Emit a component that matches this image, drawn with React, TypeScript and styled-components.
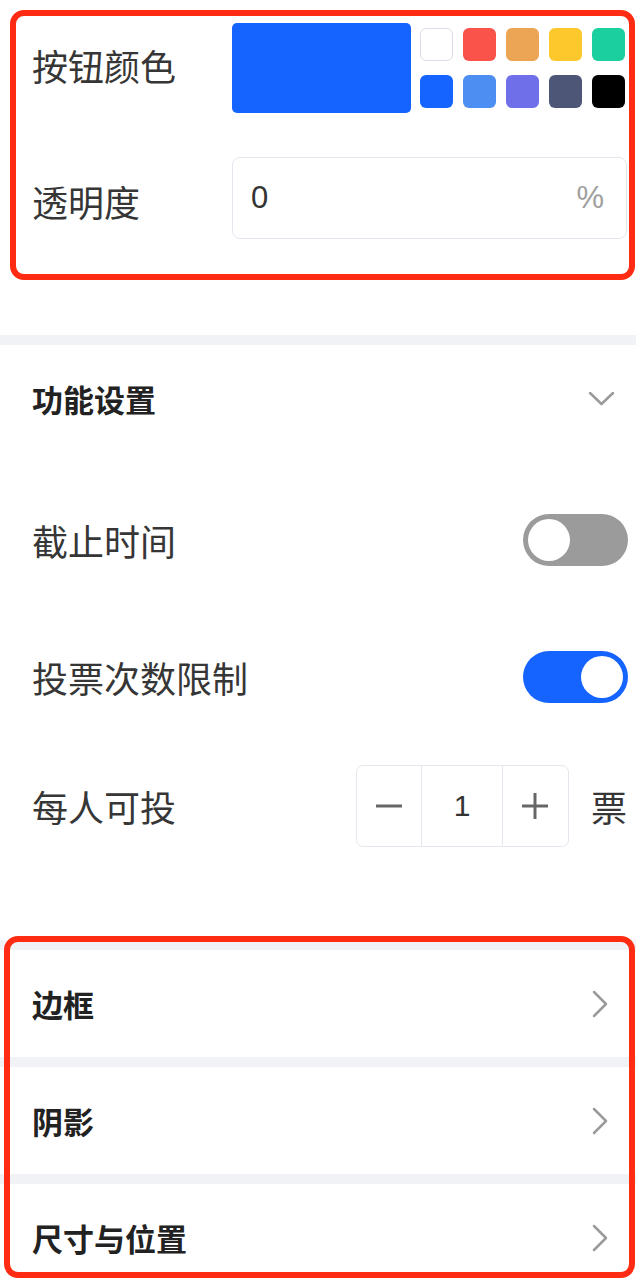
import styled, { createGlobalStyle } from 'styled-components';

const GlobalStyle = createGlobalStyle`
  body {
    margin: 0;
    background: #fff;
    font-family: "Noto Sans CJK SC", "Noto Sans", sans-serif;
  }
`;

const Page = styled.div`
  position: relative;
  width: 636px;
  height: 1280px;
  overflow: hidden;
  background: #fff;
`;

// red annotation frames drawn over the panel
const Marker = styled.div<{ $top: number; $left: number; $width: number; $height: number }>`
  position: absolute;
  top: ${(p) => p.$top}px;
  left: ${(p) => p.$left}px;
  width: ${(p) => p.$width}px;
  height: ${(p) => p.$height}px;
  box-sizing: border-box;
  border: 6px solid #ff2b12;
  border-radius: 14px;
  pointer-events: none;
`;

const Band = styled.div`
  height: 10px;
  background: #f0f2f6;
`;

const StyleSection = styled.section`
  display: flex;
  flex-direction: column;
  gap: 44px;
  padding: 23px 9px 96px 32px;
`;

const FieldRow = styled.div<{ $height: number }>`
  display: flex;
  align-items: center;
  height: ${(p) => p.$height}px;
`;

const Label = styled.span<{ $width?: number; $shift?: number }>`
  flex: 0 0 ${(p) => (p.$width ? `${p.$width}px` : 'auto')};
  font-size: 36px;
  line-height: 1;
  color: #363636;
  margin-top: ${(p) => (p.$shift ?? 0) * 2}px;
`;

const BigSwatch = styled.div`
  width: 179px;
  height: 90px;
  border-radius: 5px;
  background: #1664ff;
`;

const SwatchGrid = styled.div`
  display: grid;
  grid-template-columns: repeat(5, 33px);
  grid-auto-rows: 33px;
  column-gap: 10px;
  row-gap: 14px;
  margin-left: 9px;
`;

const Swatch = styled.div<{ $color: string }>`
  border-radius: 6px;
  background: ${(p) => p.$color};
  box-sizing: border-box;
  border: ${(p) => (p.$color === '#ffffff' ? '1.5px solid #d9dee7' : 'none')};
`;

const InputBox = styled.div`
  flex: 1;
  height: 82px;
  box-sizing: border-box;
  display: flex;
  align-items: center;
  justify-content: space-between;
  padding: 0 22px 0 18px;
  border: 1.5px solid #e4e8ee;
  border-radius: 8px;
`;

const InputValue = styled.span<{ $muted?: boolean }>`
  font-family: "Liberation Sans", Arial, sans-serif;
  font-size: 31px;
  color: ${(p) => (p.$muted ? '#a0a0a0' : '#333')};
`;

const SettingsSection = styled.section`
  display: flex;
  flex-direction: column;
  padding-bottom: 89px;
`;

const SectionHeader = styled.div`
  display: flex;
  align-items: center;
  justify-content: space-between;
  height: 106px;
  padding: 0 21px 0 32px;
`;

const Title = styled.span`
  font-size: 31px;
  line-height: 1;
  font-weight: 700;
  color: #222;
`;

const SettingRows = styled.div`
  display: flex;
  flex-direction: column;
  gap: 31px;
  padding-top: 36px;
`;

const SettingRow = styled.div<{ $height: number }>`
  display: flex;
  align-items: center;
  justify-content: space-between;
  height: ${(p) => p.$height}px;
  padding: 0 8px 0 32px;
`;

const Toggle = styled.div<{ $on: boolean }>`
  position: relative;
  width: 105px;
  height: 52px;
  border-radius: 26px;
  background: ${(p) => (p.$on ? '#1664ff' : '#9b9b9b')};

  &::after {
    content: '';
    position: absolute;
    top: 5px;
    left: ${(p) => (p.$on ? '58px' : '5px')};
    width: 42px;
    height: 42px;
    border-radius: 50%;
    background: #fff;
  }
`;

const StepperGroup = styled.div`
  display: flex;
  align-items: center;
  gap: 22px;
  padding-right: 1px;
`;

const Stepper = styled.div`
  display: flex;
  height: 82px;
  box-sizing: border-box;
  border: 1.5px solid #e4e8ee;
  border-radius: 7px;
`;

const StepCell = styled.div<{ $width: number }>`
  display: flex;
  align-items: center;
  justify-content: center;
  width: ${(p) => p.$width}px;
  font-family: "Liberation Sans", Arial, sans-serif;
  font-size: 30px;
  color: #333;

  & + & {
    border-left: 1.5px solid #e4e8ee;
  }
`;

const LinkRow = styled.div`
  display: flex;
  align-items: center;
  justify-content: space-between;
  height: 107px;
  padding: 0 28px 0 32px;
`;

const swatches = [
  '#ffffff',
  '#f9534a',
  '#eca455',
  '#fcc82b',
  '#1ccf9f',
  '#1664ff',
  '#4c8ef1',
  '#6f6fe9',
  '#4d5677',
  '#000000',
];

function ChevronDown() {
  return (
    <svg width="27" height="15" viewBox="0 0 27 15">
      <polyline points="2,2 13.5,13 25,2" fill="none" stroke="#9a9a9a" strokeWidth="2.5" strokeLinecap="round" strokeLinejoin="round" />
    </svg>
  );
}

function ChevronRight() {
  return (
    <svg width="16" height="28" viewBox="0 0 16 28">
      <polyline points="2,2 14,14 2,26" fill="none" stroke="#9a9a9a" strokeWidth="2.5" strokeLinecap="round" strokeLinejoin="round" />
    </svg>
  );
}

function MinusIcon() {
  return (
    <svg width="26" height="26" viewBox="0 0 26 26">
      <line x1="0" y1="13" x2="26" y2="13" stroke="#666" strokeWidth="3" />
    </svg>
  );
}

function PlusIcon() {
  return (
    <svg width="26" height="26" viewBox="0 0 26 26">
      <line x1="0" y1="13" x2="26" y2="13" stroke="#666" strokeWidth="3" />
      <line x1="13" y1="0" x2="13" y2="26" stroke="#666" strokeWidth="3" />
    </svg>
  );
}

export default function App() {
  return (
    <>
      <GlobalStyle />
      <Page>
        <StyleSection>
          <FieldRow $height={90}>
            <Label $width={200} $shift={-3}>按钮颜色</Label>
            <BigSwatch />
            <SwatchGrid>
              {swatches.map((c) => (
                <Swatch key={c} $color={c} />
              ))}
            </SwatchGrid>
          </FieldRow>
          <FieldRow $height={82}>
            <Label $width={200} $shift={3}>透明度</Label>
            <InputBox>
              <InputValue>0</InputValue>
              <InputValue $muted>%</InputValue>
            </InputBox>
          </FieldRow>
        </StyleSection>

        <Band />
        <SettingsSection>
          <SectionHeader>
            <Title>功能设置</Title>
            <ChevronDown />
          </SectionHeader>
          <SettingRows>
            <SettingRow $height={106}>
              <Label>截止时间</Label>
              <Toggle $on={false} />
            </SettingRow>
            <SettingRow $height={106}>
              <Label>投票次数限制</Label>
              <Toggle $on />
            </SettingRow>
            <SettingRow $height={90}>
              <Label>每人可投</Label>
              <StepperGroup>
                <Stepper>
                  <StepCell $width={64}>
                    <MinusIcon />
                  </StepCell>
                  <StepCell $width={80}>1</StepCell>
                  <StepCell $width={65}>
                    <PlusIcon />
                  </StepCell>
                </Stepper>
                <Label>票</Label>
              </StepperGroup>
            </SettingRow>
          </SettingRows>
        </SettingsSection>

        <Band />
        <LinkRow>
          <Title>边框</Title>
          <ChevronRight />
        </LinkRow>
        <Band />
        <LinkRow>
          <Title>阴影</Title>
          <ChevronRight />
        </LinkRow>
        <Band />
        <LinkRow>
          <Title>尺寸与位置</Title>
          <ChevronRight />
        </LinkRow>

        <Marker $top={10} $left={10} $width={625} $height={270} />
        <Marker $top={936} $left={4} $width={631} $height={342} />
      </Page>
    </>
  );
}
